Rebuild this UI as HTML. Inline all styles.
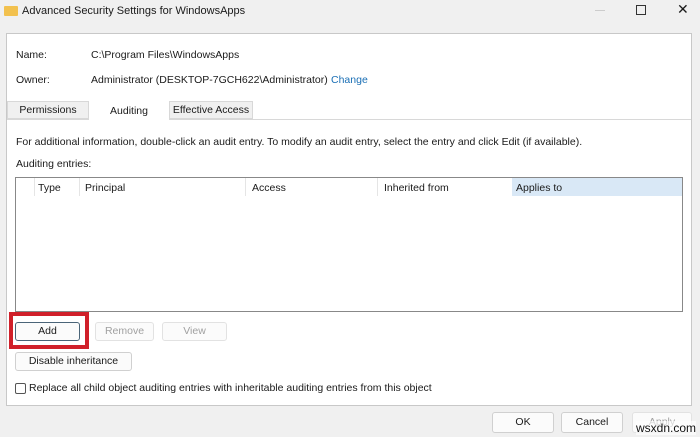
<!DOCTYPE html><html><head><style>
body{margin:0;width:700px;height:437px;background:#f0f0f0;font-family:"Liberation Sans",sans-serif;font-size:10.5px;color:#1a1a1a;position:relative;overflow:hidden}
.a{position:absolute;white-space:nowrap}
.btn{position:absolute;background:#fbfbfb;border:1px solid #d0d0d0;border-radius:3px;text-align:center;box-sizing:border-box;line-height:17px}
.dis{color:#a0a0a0;border-color:#e2e2e2}
</style></head><body>
<div class="a" style="left:4px;top:6px;width:14px;height:10px;background:#f2c14e;border-radius:1px"></div>
<div class="a" style="left:22px;top:5px;font-size:11px">Advanced Security Settings for WindowsApps</div>
<div class="a" style="left:595px;top:10px;width:10px;height:1px;background:#ccc"></div>
<div class="a" style="left:636px;top:5px;width:8px;height:8px;border:1px solid #333"></div>
<div class="a" style="left:677px;top:1px;font-size:14px">✕</div>
<div class="a" style="left:6px;top:33px;width:686px;height:373px;background:#fff;border:1px solid #c8c8c8;box-sizing:border-box"></div>
<div class="a" style="left:16px;top:49px">Name:</div>
<div class="a" style="left:91px;top:49px">C:\Program Files\WindowsApps</div>
<div class="a" style="left:16px;top:74px">Owner:</div>
<div class="a" style="left:91px;top:74px">Administrator (DESKTOP-7GCH622\Administrator)</div>
<div class="a" style="left:331px;top:74px;color:#1a6fb5">Change</div>
<div class="a" style="left:7px;top:119px;width:684px;height:1px;background:#d8d8d8"></div>
<div class="a" style="left:7px;top:101px;width:82px;height:18px;background:#f0f0f0;border:1px solid #d8d8d8;box-sizing:border-box;text-align:center;line-height:16px">Permissions</div>
<div class="a" style="left:89px;top:101px;width:80px;height:20px;background:#fff;text-align:center;line-height:20px">Auditing</div>
<div class="a" style="left:169px;top:101px;width:84px;height:18px;background:#f0f0f0;border:1px solid #d8d8d8;box-sizing:border-box;text-align:center;line-height:16px">Effective Access</div>
<div class="a" style="left:16px;top:136px">For additional information, double-click an audit entry. To modify an audit entry, select the entry and click Edit (if available).</div>
<div class="a" style="left:16px;top:158px">Auditing entries:</div>
<div class="a" style="left:15px;top:177px;width:668px;height:135px;border:1px solid #888;box-sizing:border-box;background:#fff"></div>
<div class="a" style="left:512px;top:178px;width:170px;height:18px;background:#d9e8f6"></div>
<div class="a" style="left:34px;top:178px;width:1px;height:18px;background:#e5e5e5"></div>
<div class="a" style="left:79px;top:178px;width:1px;height:18px;background:#e5e5e5"></div>
<div class="a" style="left:245px;top:178px;width:1px;height:18px;background:#e5e5e5"></div>
<div class="a" style="left:377px;top:178px;width:1px;height:18px;background:#e5e5e5"></div>
<div class="a" style="left:38px;top:182px">Type</div>
<div class="a" style="left:85px;top:182px">Principal</div>
<div class="a" style="left:252px;top:182px">Access</div>
<div class="a" style="left:384px;top:182px">Inherited from</div>
<div class="a" style="left:516px;top:182px">Applies to</div>
<div class="a" style="left:9px;top:312px;width:80px;height:37px;border:4px solid #d0202a;box-sizing:border-box"></div>
<div class="btn" style="left:15px;top:322px;width:65px;height:19px;border-color:#4a6478">Add</div>
<div class="btn dis" style="left:95px;top:322px;width:59px;height:19px">Remove</div>
<div class="btn dis" style="left:162px;top:322px;width:65px;height:19px">View</div>
<div class="btn" style="left:15px;top:352px;width:117px;height:19px">Disable inheritance</div>
<div class="a" style="left:15px;top:383px;width:11px;height:11px;border:1px solid #555;border-radius:2px;box-sizing:border-box"></div>
<div class="a" style="left:29px;top:382px">Replace all child object auditing entries with inheritable auditing entries from this object</div>
<div class="btn" style="left:492px;top:412px;width:62px;height:21px;line-height:19px">OK</div>
<div class="btn" style="left:561px;top:412px;width:62px;height:21px;line-height:19px">Cancel</div>
<div class="btn dis" style="left:632px;top:412px;width:60px;height:21px;line-height:19px">Apply</div>
<div class="a" style="left:636px;top:421px;font-size:12px;color:#111;background:rgba(255,255,255,.6)">wsxdn.com</div>
</body></html>
